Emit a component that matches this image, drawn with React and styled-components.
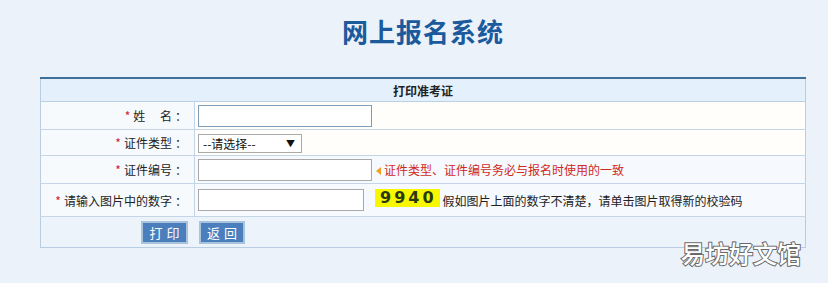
import React from "react";
import styled, { createGlobalStyle } from "styled-components";

//global
const GlobalStyle = createGlobalStyle`
  html, body {
    margin: 0;
    padding: 0;
    background: #ebf2fa;
  }
  body {
    font-family: "Noto Sans CJK SC", "Liberation Sans", sans-serif;
    font-size: 12px;
    color: #222;
  }
`;

//styled components
const Page = styled.div`
  position: relative;
  width: 828px;
  height: 283px;
  overflow: hidden;
`;

const Wrap = styled.div`
  width: 766px;
  margin-left: 40px;
`;

const Title = styled.h1`
  margin: 0;
  height: 77px;
  line-height: 62px;
  text-align: center;
  font-size: 26px;
  font-weight: 700;
  color: #1b5a9c;
  letter-spacing: 1px;
`;

const Table = styled.table`
  width: 100%;
  border-collapse: collapse;
  border-top: 2px solid #3f7099;
  border-left: 1px solid #b8cde1;
  border-right: 1px solid #b8cde1;
  border-bottom: 1px solid #b8cde1;
`;

const HeadCell = styled.th`
  height: 22px;
  padding: 0;
  background: #e4f0fc;
  border-bottom: 1px solid #bcd0e3;
  font-size: 12px;
  font-weight: 700;
  color: #222;
  text-align: center;
`;

const Row = styled.tr`
  height: ${(p) => p.$h}px;
  border-bottom: 1px solid #c3d5e6;
`;

const LabelCell = styled.td`
  width: 146px;
  padding: 0 7px 0 0;
  text-align: right;
  background: #f7fafd;
  border-right: 1px solid #c3d5e6;
  white-space: nowrap;
`;

const Colon = styled.span`
  margin-left: 3px;
`;

const FieldCell = styled.td`
  padding: 0 0 0 3px;
  background: ${(p) => (p.$warm ? "#fffefa" : "#f6f9fd")};
  white-space: nowrap;
`;

const Star = styled.span`
  color: #d0202a;
  margin-right: 3px;
`;

const TextInput = styled.input`
  box-sizing: border-box;
  width: ${(p) => p.$w}px;
  height: 22px;
  margin: 0;
  vertical-align: middle;
  border: 1px solid ${(p) => (p.$focus ? "#7f9db9" : "#a9a9a9")};
  background: #fff;
  outline: none;
`;

const Select = styled.div`
  box-sizing: border-box;
  display: inline-flex;
  align-items: center;
  justify-content: space-between;
  width: 104px;
  height: 19px;
  padding: 0 6px 0 4px;
  vertical-align: middle;
  border: 1px solid #a9a9a9;
  background: #fff;
  font-size: 12px;
  color: #111;
`;

const Caret = styled.span`
  font-size: 9px;
  color: #111;
`;

const Hint = styled.span`
  margin-left: 4px;
  color: #d0281e;
  vertical-align: middle;
`;

const HintArrow = styled.span`
  display: inline-block;
  width: 0;
  height: 0;
  margin-right: 3px;
  border-top: 4px solid transparent;
  border-bottom: 4px solid transparent;
  border-right: 5px solid #f0a020;
`;

const Captcha = styled.span`
  display: inline-block;
  margin: 0 3px 0 11px;
  padding: 0 3px 0 5px;
  height: 18px;
  line-height: 18px;
  background: #f7f700;
  color: #2a3a10;
  font-family: "DejaVu Sans", sans-serif;
  font-size: 16px;
  font-weight: 600;
  letter-spacing: 3px;
  vertical-align: middle;
  position: relative;
  top: -2px;
`;

const Note = styled.span`
  color: #222;
  vertical-align: middle;
`;

const ButtonRow = styled.td`
  height: 30px;
  padding: 0 0 0 100px;
  background: #edf3fa;
`;

const Button = styled.button`
  box-sizing: border-box;
  height: 23px;
  width: ${(p) => p.$w}px;
  margin-right: 11px;
  padding: 0;
  border: 2px solid #a9c3dc;
  background: #4a7ebd;
  color: #fff;
  font-family: inherit;
  font-size: 13px;
  letter-spacing: 4px;
  text-indent: 4px;
  cursor: pointer;
`;

const Watermark = styled.div`
  position: absolute;
  left: 681px;
  top: 235px;
  font-size: 24px;
  font-weight: 500;
  color: #fff;
  -webkit-text-stroke: 2px #6a6a6a;
  paint-order: stroke fill;
`;

//app
function App() {
  return (
    <Page>
      <GlobalStyle />
      <Wrap>
        <Title>网上报名系统</Title>
        <Table>
          <thead>
            <tr>
              <HeadCell colSpan={2}>打印准考证</HeadCell>
            </tr>
          </thead>
          <tbody>
            <Row $h={28}>
              <LabelCell>
                <Star>*</Star>姓　 名<Colon>：</Colon>
              </LabelCell>
              <FieldCell $warm>
                <TextInput $w={174} $focus />
              </FieldCell>
            </Row>
            <Row $h={26}>
              <LabelCell>
                <Star>*</Star>证件类型<Colon>：</Colon>
              </LabelCell>
              <FieldCell $warm>
                <Select>
                  --请选择--<Caret>▼</Caret>
                </Select>
              </FieldCell>
            </Row>
            <Row $h={28}>
              <LabelCell>
                <Star>*</Star>证件编号<Colon>：</Colon>
              </LabelCell>
              <FieldCell>
                <TextInput $w={174} />
                <Hint>
                  <HintArrow />
                  证件类型、证件编号务必与报名时使用的一致
                </Hint>
              </FieldCell>
            </Row>
            <Row $h={33}>
              <LabelCell>
                <Star>*</Star>请输入图片中的数字<Colon>：</Colon>
              </LabelCell>
              <FieldCell>
                <TextInput $w={166} />
                <Captcha>9940</Captcha>
                <Note>假如图片上面的数字不清楚，请单击图片取得新的校验码</Note>
              </FieldCell>
            </Row>
            <tr>
              <ButtonRow colSpan={2}>
                <Button $w={47}>打印</Button>
                <Button $w={46}>返回</Button>
              </ButtonRow>
            </tr>
          </tbody>
        </Table>
      </Wrap>
      <Watermark>易坊好文馆</Watermark>
    </Page>
  );
}

export default App;
